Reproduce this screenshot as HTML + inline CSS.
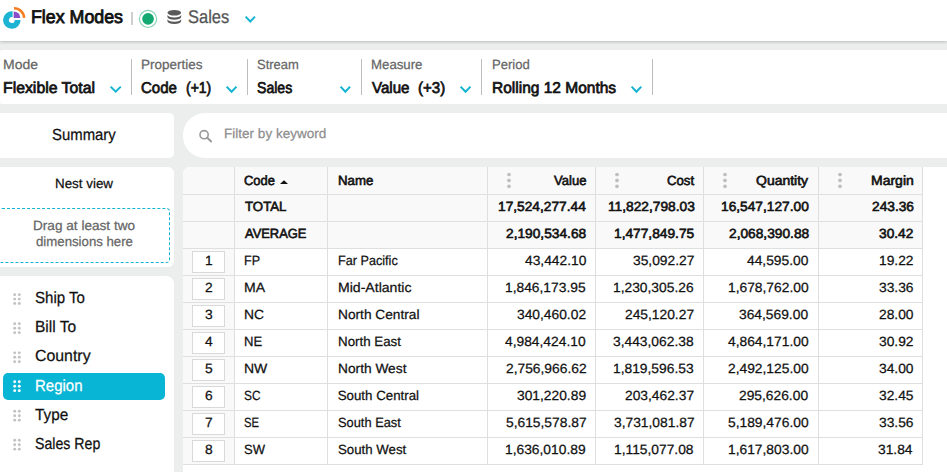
<!DOCTYPE html>
<html>
<head>
<meta charset="utf-8">
<title>Flex Modes</title>
<style>
*{box-sizing:border-box;margin:0;padding:0}
html,body{width:947px;height:472px;overflow:hidden}
body{background:#eceeee;font-family:"Liberation Sans",sans-serif;color:#111;position:relative}
.abs{position:absolute}
.t{position:absolute;white-space:nowrap;line-height:1;transform-origin:0 0;text-rendering:geometricPrecision}
#hdr{left:0;top:0;width:947px;height:41px;background:#fff;box-shadow:0 1px 3px rgba(0,0,0,.22)}
#fbar{left:0;top:50px;width:947px;height:54px;background:#fff;border-radius:2px 0 0 2px}
.sep{position:absolute;top:59px;width:1px;height:36px;background:#bdbdbd}
#sum{left:0;top:113px;width:174px;height:45px;background:#fff;border-radius:0 5px 5px 0}
#nest{left:0;top:167px;width:174px;height:100px;background:#fff;border-radius:0 6px 6px 0}
#drop{left:-2px;top:208px;width:172px;height:55px;border:1px dashed #12b3d3;border-radius:4px}
#dims{left:0;top:276px;width:174px;height:210px;background:#fff;border-radius:0 8px 0 0}
#sel{left:3px;top:373px;width:162px;height:27px;background:#09b5d5;border-radius:5px}
#search{left:183px;top:113px;width:780px;height:45px;background:#fff;border-radius:22px 0 0 22px}
#tbl{left:183px;top:167px;width:780px;height:320px;background:#fff;border-radius:7px 0 0 0;overflow:hidden}
.vl{top:167px;width:1px;height:298px;background:#dee0e0}
.hl{left:183px;width:740px;height:1px;background:#dee0e0}
.nb{left:192px;width:33px;height:22px;background:#fff;border:1px solid #d9d9d9}
</style>
</head>
<body>
<div id="hdr" class="abs"></div>
<svg class="abs" style="left:0;top:0" width="30" height="41" viewBox="0 0 30 41">
<path d="M12.6 11.3 A8.8 8.8 0 1 0 20.6 19.9 L14.7 19.9 A2.9 2.9 0 1 1 12.6 17.3 Z" fill="#1db4d3"/>
<path d="M13.7 17.9 L13.7 11.4 A6.5 6.5 0 0 1 20.3 17.9 Z" fill="#8a4fc8"/>
<path d="M14.0 8.2 A10.1 10.1 0 0 1 24.1 17.9" fill="none" stroke="#f57c1f" stroke-width="2.5"/>
</svg>
<div class="abs" style="left:131px;top:12px;width:2px;height:13px;background:#cfcfcf"></div>
<svg class="abs" style="left:136px;top:6px" width="52" height="26" viewBox="136 6 52 26">
<circle cx="148" cy="18.9" r="8.55" fill="#fff" stroke="#7ccfae" stroke-width="1.1"/>
<circle cx="148.05" cy="18.85" r="5.85" fill="#14a873"/>
<ellipse cx="174.3" cy="12.75" rx="6.85" ry="2.85" fill="#595959"/>
<path d="M167.45 14.75 A6.85 2.85 0 0 0 181.15 14.75 L181.15 17.0 A6.85 2.75 0 0 1 167.45 17.0 Z" fill="#595959"/>
<path d="M167.45 18.95 A6.85 2.85 0 0 0 181.15 18.95 L181.15 21.2 A6.85 2.75 0 0 1 167.45 21.2 Z" fill="#595959"/>
</svg>
<svg class="abs" style="left:243.3px;top:13.6px" width="14.6" height="10.4" viewBox="-2 -2 14.6 10.4"><path d="M0.60 0.60 L5.30 5.50 L10.00 0.60" fill="none" stroke="#16b4d3" stroke-width="2.0"/></svg>
<div id="fbar" class="abs"></div>
<div class="sep" style="left:131px"></div><div class="sep" style="left:247px"></div><div class="sep" style="left:361px"></div><div class="sep" style="left:481px"></div><div class="sep" style="left:652px"></div>
<svg class="abs" style="left:107.8px;top:83.9px" width="15.4" height="10.6" viewBox="-2 -2 15.4 10.6"><path d="M0.60 0.60 L5.70 5.70 L10.80 0.60" fill="none" stroke="#16b4d3" stroke-width="2.0"/></svg><svg class="abs" style="left:223.8px;top:83.9px" width="15.1" height="10.6" viewBox="-2 -2 15.1 10.6"><path d="M0.60 0.60 L5.55 5.70 L10.50 0.60" fill="none" stroke="#16b4d3" stroke-width="2.0"/></svg><svg class="abs" style="left:337.8px;top:83.9px" width="14.7" height="10.6" viewBox="-2 -2 14.7 10.6"><path d="M0.60 0.60 L5.35 5.70 L10.10 0.60" fill="none" stroke="#16b4d3" stroke-width="2.0"/></svg><svg class="abs" style="left:457.8px;top:83.9px" width="15.1" height="10.6" viewBox="-2 -2 15.1 10.6"><path d="M0.60 0.60 L5.55 5.70 L10.50 0.60" fill="none" stroke="#16b4d3" stroke-width="2.0"/></svg><svg class="abs" style="left:629.1px;top:83.9px" width="14.9" height="10.6" viewBox="-2 -2 14.9 10.6"><path d="M0.60 0.60 L5.45 5.70 L10.30 0.60" fill="none" stroke="#16b4d3" stroke-width="2.0"/></svg>
<div id="sum" class="abs"></div>
<div id="nest" class="abs"></div>
<div id="drop" class="abs"></div>
<div id="dims" class="abs"></div>
<div id="sel" class="abs"></div>
<svg class="abs" style="left:0;top:0" width="30" height="472" fill="#c2c2c2"><circle cx="14.7" cy="294.65" r="1.45"/><circle cx="14.7" cy="299.10" r="1.45"/><circle cx="14.7" cy="303.55" r="1.45"/><circle cx="19.3" cy="294.65" r="1.45"/><circle cx="19.3" cy="299.10" r="1.45"/><circle cx="19.3" cy="303.55" r="1.45"/></svg><svg class="abs" style="left:0;top:0" width="30" height="472" fill="#c2c2c2"><circle cx="14.7" cy="323.75" r="1.45"/><circle cx="14.7" cy="328.20" r="1.45"/><circle cx="14.7" cy="332.65" r="1.45"/><circle cx="19.3" cy="323.75" r="1.45"/><circle cx="19.3" cy="328.20" r="1.45"/><circle cx="19.3" cy="332.65" r="1.45"/></svg><svg class="abs" style="left:0;top:0" width="30" height="472" fill="#c2c2c2"><circle cx="14.7" cy="352.85" r="1.45"/><circle cx="14.7" cy="357.30" r="1.45"/><circle cx="14.7" cy="361.75" r="1.45"/><circle cx="19.3" cy="352.85" r="1.45"/><circle cx="19.3" cy="357.30" r="1.45"/><circle cx="19.3" cy="361.75" r="1.45"/></svg><svg class="abs" style="left:0;top:0" width="30" height="472" fill="#fff"><circle cx="14.7" cy="381.75" r="1.45"/><circle cx="14.7" cy="386.20" r="1.45"/><circle cx="14.7" cy="390.65" r="1.45"/><circle cx="19.3" cy="381.75" r="1.45"/><circle cx="19.3" cy="386.20" r="1.45"/><circle cx="19.3" cy="390.65" r="1.45"/></svg><svg class="abs" style="left:0;top:0" width="30" height="472" fill="#c2c2c2"><circle cx="14.7" cy="411.25" r="1.45"/><circle cx="14.7" cy="415.70" r="1.45"/><circle cx="14.7" cy="420.15" r="1.45"/><circle cx="19.3" cy="411.25" r="1.45"/><circle cx="19.3" cy="415.70" r="1.45"/><circle cx="19.3" cy="420.15" r="1.45"/></svg><svg class="abs" style="left:0;top:0" width="30" height="472" fill="#c2c2c2"><circle cx="14.7" cy="440.25" r="1.45"/><circle cx="14.7" cy="444.70" r="1.45"/><circle cx="14.7" cy="449.15" r="1.45"/><circle cx="19.3" cy="440.25" r="1.45"/><circle cx="19.3" cy="444.70" r="1.45"/><circle cx="19.3" cy="449.15" r="1.45"/></svg>
<div id="search" class="abs"></div>
<svg class="abs" style="left:196px;top:126px" width="20" height="20" viewBox="196 126 20 20"><circle cx="204.1" cy="134.7" r="4.1" fill="none" stroke="#9a9a9a" stroke-width="1.6"/><path d="M207.2 137.8 L211.2 141.4" stroke="#9a9a9a" stroke-width="2" stroke-linecap="round"/></svg>
<div id="tbl" class="abs"><div class="abs" style="left:0;top:0;width:739px;height:81px;background:#f9f9f9"></div><div class="abs" style="left:0;top:0;width:51px;height:297px;background:#f9f9f9"></div></div>
<div class="abs vl" style="left:234px"></div><div class="abs vl" style="left:327px"></div><div class="abs vl" style="left:487px"></div><div class="abs vl" style="left:595px"></div><div class="abs vl" style="left:703px"></div><div class="abs vl" style="left:818px"></div><div class="abs vl" style="left:922px"></div>
<div class="abs hl" style="top:194px"></div><div class="abs hl" style="top:221px"></div><div class="abs hl" style="top:248px"></div><div class="abs hl" style="top:275px"></div><div class="abs hl" style="top:302px"></div><div class="abs hl" style="top:329px"></div><div class="abs hl" style="top:356px"></div><div class="abs hl" style="top:383px"></div><div class="abs hl" style="top:410px"></div><div class="abs hl" style="top:437px"></div><div class="abs hl" style="top:464px"></div>
<div class="abs nb" style="top:251px"></div><div class="abs nb" style="top:278px"></div><div class="abs nb" style="top:305px"></div><div class="abs nb" style="top:332px"></div><div class="abs nb" style="top:359px"></div><div class="abs nb" style="top:386px"></div><div class="abs nb" style="top:413px"></div><div class="abs nb" style="top:440px"></div>
<svg class="abs" style="left:505.6px;top:170px" width="6" height="20" viewBox="0 0 6 20" fill="#bfbfbf"><circle cx="3" cy="4.5" r="1.85"/><circle cx="3" cy="10.4" r="1.85"/><circle cx="3" cy="16.3" r="1.85"/></svg><svg class="abs" style="left:613.6px;top:170px" width="6" height="20" viewBox="0 0 6 20" fill="#bfbfbf"><circle cx="3" cy="4.5" r="1.85"/><circle cx="3" cy="10.4" r="1.85"/><circle cx="3" cy="16.3" r="1.85"/></svg><svg class="abs" style="left:721.6px;top:170px" width="6" height="20" viewBox="0 0 6 20" fill="#bfbfbf"><circle cx="3" cy="4.5" r="1.85"/><circle cx="3" cy="10.4" r="1.85"/><circle cx="3" cy="16.3" r="1.85"/></svg><svg class="abs" style="left:836.8px;top:170px" width="6" height="20" viewBox="0 0 6 20" fill="#bfbfbf"><circle cx="3" cy="4.5" r="1.85"/><circle cx="3" cy="10.4" r="1.85"/><circle cx="3" cy="16.3" r="1.85"/></svg>
<svg class="abs" style="left:280px;top:180px" width="8" height="4" viewBox="0 0 8 4"><path d="M0 4 L4 0.2 L8 4 Z" fill="#111"/></svg>
<span id="t_title" class="t" style="left:31.03px;top:8.00px;font-size:18.4px;font-weight:400;color:#111;-webkit-text-stroke:0.85px;transform:scaleX(0.9675)">Flex Modes</span>
<span id="t_sales" class="t" style="left:188.03px;top:8.00px;font-size:18.4px;font-weight:400;color:#555;-webkit-text-stroke:0.25px;transform:scaleX(0.8961)">Sales</span>
<span id="t_l_mode" class="t" style="left:2.85px;top:58.00px;font-size:13.3px;font-weight:400;color:#666;-webkit-text-stroke:0.25px;transform:scaleX(1.0520)">Mode</span>
<span id="t_v_mode" class="t" style="left:2.89px;top:81.00px;font-size:15.7px;font-weight:400;color:#111;-webkit-text-stroke:0.72px;transform:scaleX(1.0078)">Flexible Total</span>
<span id="t_l_prop" class="t" style="left:140.78px;top:58.00px;font-size:13.3px;font-weight:400;color:#666;-webkit-text-stroke:0.25px;transform:scaleX(1.0160)">Properties</span>
<span id="t_v_prop1" class="t" style="left:141.32px;top:81.00px;font-size:15.7px;font-weight:400;color:#111;-webkit-text-stroke:0.72px;transform:scaleX(0.9578)">Code</span>
<span id="t_v_prop2" class="t" style="left:186.25px;top:81.00px;font-size:15.7px;font-weight:400;color:#111;-webkit-text-stroke:0.72px;transform:scaleX(0.8917)">(+1)</span>
<span id="t_l_stream" class="t" style="left:257.01px;top:58.00px;font-size:13.3px;font-weight:400;color:#666;-webkit-text-stroke:0.25px;transform:scaleX(0.9749)">Stream</span>
<span id="t_v_stream" class="t" style="left:257.28px;top:81.00px;font-size:15.7px;font-weight:400;color:#111;-webkit-text-stroke:0.72px;transform:scaleX(0.8981)">Sales</span>
<span id="t_l_meas" class="t" style="left:370.70px;top:58.00px;font-size:13.3px;font-weight:400;color:#666;-webkit-text-stroke:0.25px;transform:scaleX(0.9950)">Measure</span>
<span id="t_v_meas1" class="t" style="left:371.88px;top:81.00px;font-size:15.7px;font-weight:400;color:#111;-webkit-text-stroke:0.72px;transform:scaleX(0.9631)">Value</span>
<span id="t_v_meas2" class="t" style="left:418.42px;top:81.00px;font-size:15.7px;font-weight:400;color:#111;-webkit-text-stroke:0.72px;transform:scaleX(0.9615)">(+3)</span>
<span id="t_l_per" class="t" style="left:491.92px;top:58.00px;font-size:13.3px;font-weight:400;color:#666;-webkit-text-stroke:0.25px;transform:scaleX(0.9823)">Period</span>
<span id="t_v_per" class="t" style="left:491.91px;top:81.00px;font-size:15.7px;font-weight:400;color:#111;-webkit-text-stroke:0.72px;transform:scaleX(0.9880)">Rolling 12 Months</span>
<span id="t_sum" class="t" style="left:52.04px;top:127.00px;font-size:16.1px;font-weight:400;color:#111;-webkit-text-stroke:0.25px;transform:scaleX(0.9255)">Summary</span>
<span id="t_nest" class="t" style="left:55.19px;top:177.00px;font-size:13.3px;font-weight:400;color:#111;-webkit-text-stroke:0.25px;transform:scaleX(1.0062)">Nest view</span>
<span id="t_drag1" class="t" style="left:33.38px;top:219.00px;font-size:13.3px;font-weight:400;color:#666;-webkit-text-stroke:0.25px;transform:scaleX(1.0229)">Drag at least two</span>
<span id="t_drag2" class="t" style="left:35.90px;top:235.00px;font-size:13.3px;font-weight:400;color:#666;-webkit-text-stroke:0.25px;transform:scaleX(0.9938)">dimensions here</span>
<span id="t_dim0" class="t" style="left:34.53px;top:290.00px;font-size:16.1px;font-weight:400;color:#111;-webkit-text-stroke:0.25px;transform:scaleX(0.9359)">Ship To</span>
<span id="t_dim1" class="t" style="left:34.79px;top:319.00px;font-size:16.1px;font-weight:400;color:#111;-webkit-text-stroke:0.25px;transform:scaleX(0.9644)">Bill To</span>
<span id="t_dim2" class="t" style="left:34.76px;top:348.00px;font-size:16.1px;font-weight:400;color:#111;-webkit-text-stroke:0.25px;transform:scaleX(0.9865)">Country</span>
<span id="t_dim3" class="t" style="left:34.84px;top:378.00px;font-size:16.1px;font-weight:400;color:#fff;-webkit-text-stroke:0.25px;transform:scaleX(0.9313)">Region</span>
<span id="t_dim4" class="t" style="left:34.76px;top:407.00px;font-size:16.1px;font-weight:400;color:#111;-webkit-text-stroke:0.25px;transform:scaleX(0.9529)">Type</span>
<span id="t_dim5" class="t" style="left:34.56px;top:436.00px;font-size:16.1px;font-weight:400;color:#111;-webkit-text-stroke:0.25px;transform:scaleX(0.8792)">Sales Rep</span>
<span id="t_filter" class="t" style="left:223.69px;top:127.00px;font-size:13.4px;font-weight:400;color:#8e8e8e;-webkit-text-stroke:0.25px;transform:scaleX(1.0111)">Filter by keyword</span>
<span id="t_hcode" class="t" style="left:244.21px;top:174.00px;font-size:13.3px;font-weight:400;color:#111;-webkit-text-stroke:0.61px;transform:scaleX(0.9710)">Code</span>
<span id="t_hname" class="t" style="left:337.65px;top:174.00px;font-size:13.3px;font-weight:400;color:#111;-webkit-text-stroke:0.61px;transform:scaleX(0.9971)">Name</span>
<span id="t_h0" class="t" style="left:553.75px;top:174.00px;font-size:13.3px;font-weight:400;color:#111;-webkit-text-stroke:0.61px;transform:scaleX(0.9818)">Value</span>
<span id="t_h1" class="t" style="left:666.71px;top:174.00px;font-size:13.3px;font-weight:400;color:#111;-webkit-text-stroke:0.61px;transform:scaleX(0.9889)">Cost</span>
<span id="t_h2" class="t" style="left:755.94px;top:174.00px;font-size:13.3px;font-weight:400;color:#111;-webkit-text-stroke:0.61px;transform:scaleX(1.0525)">Quantity</span>
<span id="t_h3" class="t" style="left:870.91px;top:174.00px;font-size:13.3px;font-weight:400;color:#111;-webkit-text-stroke:0.61px;transform:scaleX(1.0522)">Margin</span>
<span id="t_c0" class="t" style="left:244.50px;top:200.00px;font-size:13.3px;font-weight:400;color:#111;-webkit-text-stroke:0.61px;transform:scaleX(0.9952)">TOTAL</span>
<span id="t_c1" class="t" style="left:244.54px;top:227.00px;font-size:13.3px;font-weight:400;color:#111;-webkit-text-stroke:0.61px;transform:scaleX(0.9708)">AVERAGE</span>
<span id="t_c2" class="t" style="left:243.96px;top:254.00px;font-size:13.3px;font-weight:400;color:#111;-webkit-text-stroke:0.25px;transform:scaleX(0.9419)">FP</span>
<span id="t_c3" class="t" style="left:243.94px;top:281.00px;font-size:13.3px;font-weight:400;color:#111;-webkit-text-stroke:0.25px;transform:scaleX(1.0579)">MA</span>
<span id="t_c4" class="t" style="left:243.96px;top:308.00px;font-size:13.3px;font-weight:400;color:#111;-webkit-text-stroke:0.25px;transform:scaleX(1.0423)">NC</span>
<span id="t_c5" class="t" style="left:244.02px;top:335.00px;font-size:13.3px;font-weight:400;color:#111;-webkit-text-stroke:0.25px;transform:scaleX(0.9824)">NE</span>
<span id="t_c6" class="t" style="left:243.95px;top:362.00px;font-size:13.3px;font-weight:400;color:#111;-webkit-text-stroke:0.25px;transform:scaleX(1.0541)">NW</span>
<span id="t_c7" class="t" style="left:244.05px;top:389.00px;font-size:13.3px;font-weight:400;color:#111;-webkit-text-stroke:0.25px;transform:scaleX(0.8914)">SC</span>
<span id="t_c8" class="t" style="left:244.08px;top:416.00px;font-size:13.3px;font-weight:400;color:#111;-webkit-text-stroke:0.25px;transform:scaleX(0.8478)">SE</span>
<span id="t_c9" class="t" style="left:244.01px;top:443.00px;font-size:13.3px;font-weight:400;color:#111;-webkit-text-stroke:0.25px;transform:scaleX(0.9810)">SW</span>
<span id="t_m2" class="t" style="left:337.65px;top:254.00px;font-size:13.3px;font-weight:400;color:#111;-webkit-text-stroke:0.25px;transform:scaleX(0.9512)">Far Pacific</span>
<span id="t_m3" class="t" style="left:337.54px;top:281.00px;font-size:13.3px;font-weight:400;color:#111;-webkit-text-stroke:0.25px;transform:scaleX(1.0579)">Mid-Atlantic</span>
<span id="t_m4" class="t" style="left:337.57px;top:308.00px;font-size:13.3px;font-weight:400;color:#111;-webkit-text-stroke:0.25px;transform:scaleX(1.0304)">North Central</span>
<span id="t_m5" class="t" style="left:337.60px;top:335.00px;font-size:13.3px;font-weight:400;color:#111;-webkit-text-stroke:0.25px;transform:scaleX(1.0024)">North East</span>
<span id="t_m6" class="t" style="left:337.57px;top:362.00px;font-size:13.3px;font-weight:400;color:#111;-webkit-text-stroke:0.25px;transform:scaleX(1.0330)">North West</span>
<span id="t_m7" class="t" style="left:337.70px;top:389.00px;font-size:13.3px;font-weight:400;color:#111;-webkit-text-stroke:0.25px;transform:scaleX(1.0000)">South Central</span>
<span id="t_m8" class="t" style="left:337.72px;top:416.00px;font-size:13.3px;font-weight:400;color:#111;-webkit-text-stroke:0.25px;transform:scaleX(0.9659)">South East</span>
<span id="t_m9" class="t" style="left:337.70px;top:443.00px;font-size:13.3px;font-weight:400;color:#111;-webkit-text-stroke:0.25px;transform:scaleX(0.9971)">South West</span>
<span id="t_d0_0" class="t" style="left:498.23px;top:200.00px;font-size:13.3px;font-weight:400;color:#111;-webkit-text-stroke:0.61px;transform:scaleX(1.0326)">17,524,277.44</span>
<span id="t_d0_1" class="t" style="left:607.52px;top:200.00px;font-size:13.3px;font-weight:400;color:#111;-webkit-text-stroke:0.61px;transform:scaleX(1.0326)">11,822,798.03</span>
<span id="t_d0_2" class="t" style="left:720.88px;top:200.00px;font-size:13.3px;font-weight:400;color:#111;-webkit-text-stroke:0.61px;transform:scaleX(1.0326)">16,547,127.00</span>
<span id="t_d0_3" class="t" style="left:871.64px;top:200.00px;font-size:13.3px;font-weight:400;color:#111;-webkit-text-stroke:0.61px;transform:scaleX(1.0326)">243.36</span>
<span id="t_d1_0" class="t" style="left:506.23px;top:227.00px;font-size:13.3px;font-weight:400;color:#111;-webkit-text-stroke:0.61px;transform:scaleX(1.0326)">2,190,534.68</span>
<span id="t_d1_1" class="t" style="left:613.97px;top:227.00px;font-size:13.3px;font-weight:400;color:#111;-webkit-text-stroke:0.61px;transform:scaleX(1.0326)">1,477,849.75</span>
<span id="t_d1_2" class="t" style="left:728.63px;top:227.00px;font-size:13.3px;font-weight:400;color:#111;-webkit-text-stroke:0.61px;transform:scaleX(1.0326)">2,068,390.88</span>
<span id="t_d1_3" class="t" style="left:879.12px;top:227.00px;font-size:13.3px;font-weight:400;color:#111;-webkit-text-stroke:0.61px;transform:scaleX(1.0326)">30.42</span>
<span id="t_d2_0" class="t" style="left:524.54px;top:254.00px;font-size:13.3px;font-weight:400;color:#111;-webkit-text-stroke:0.25px;transform:scaleX(1.0376)">43,442.10</span>
<span id="t_d2_1" class="t" style="left:632.80px;top:254.00px;font-size:13.3px;font-weight:400;color:#111;-webkit-text-stroke:0.25px;transform:scaleX(1.0376)">35,092.27</span>
<span id="t_d2_2" class="t" style="left:746.94px;top:254.00px;font-size:13.3px;font-weight:400;color:#111;-webkit-text-stroke:0.25px;transform:scaleX(1.0376)">44,595.00</span>
<span id="t_d2_3" class="t" style="left:878.72px;top:254.00px;font-size:13.3px;font-weight:400;color:#111;-webkit-text-stroke:0.25px;transform:scaleX(1.0376)">19.22</span>
<span id="t_d3_0" class="t" style="left:505.34px;top:281.00px;font-size:13.3px;font-weight:400;color:#111;-webkit-text-stroke:0.25px;transform:scaleX(1.0376)">1,846,173.95</span>
<span id="t_d3_1" class="t" style="left:613.34px;top:281.00px;font-size:13.3px;font-weight:400;color:#111;-webkit-text-stroke:0.25px;transform:scaleX(1.0376)">1,230,305.26</span>
<span id="t_d3_2" class="t" style="left:727.74px;top:281.00px;font-size:13.3px;font-weight:400;color:#111;-webkit-text-stroke:0.25px;transform:scaleX(1.0376)">1,678,762.00</span>
<span id="t_d3_3" class="t" style="left:878.72px;top:281.00px;font-size:13.3px;font-weight:400;color:#111;-webkit-text-stroke:0.25px;transform:scaleX(1.0376)">33.36</span>
<span id="t_d4_0" class="t" style="left:517.02px;top:308.00px;font-size:13.3px;font-weight:400;color:#111;-webkit-text-stroke:0.25px;transform:scaleX(1.0376)">340,460.02</span>
<span id="t_d4_1" class="t" style="left:625.02px;top:308.00px;font-size:13.3px;font-weight:400;color:#111;-webkit-text-stroke:0.25px;transform:scaleX(1.0376)">245,120.27</span>
<span id="t_d4_2" class="t" style="left:739.42px;top:308.00px;font-size:13.3px;font-weight:400;color:#111;-webkit-text-stroke:0.25px;transform:scaleX(1.0376)">364,569.00</span>
<span id="t_d4_3" class="t" style="left:878.72px;top:308.00px;font-size:13.3px;font-weight:400;color:#111;-webkit-text-stroke:0.25px;transform:scaleX(1.0376)">28.00</span>
<span id="t_d5_0" class="t" style="left:505.34px;top:335.00px;font-size:13.3px;font-weight:400;color:#111;-webkit-text-stroke:0.25px;transform:scaleX(1.0376)">4,984,424.10</span>
<span id="t_d5_1" class="t" style="left:613.34px;top:335.00px;font-size:13.3px;font-weight:400;color:#111;-webkit-text-stroke:0.25px;transform:scaleX(1.0376)">3,443,062.38</span>
<span id="t_d5_2" class="t" style="left:727.74px;top:335.00px;font-size:13.3px;font-weight:400;color:#111;-webkit-text-stroke:0.25px;transform:scaleX(1.0376)">4,864,171.00</span>
<span id="t_d5_3" class="t" style="left:878.72px;top:335.00px;font-size:13.3px;font-weight:400;color:#111;-webkit-text-stroke:0.25px;transform:scaleX(1.0376)">30.92</span>
<span id="t_d6_0" class="t" style="left:505.60px;top:362.00px;font-size:13.3px;font-weight:400;color:#111;-webkit-text-stroke:0.25px;transform:scaleX(1.0376)">2,756,966.62</span>
<span id="t_d6_1" class="t" style="left:613.34px;top:362.00px;font-size:13.3px;font-weight:400;color:#111;-webkit-text-stroke:0.25px;transform:scaleX(1.0376)">1,819,596.53</span>
<span id="t_d6_2" class="t" style="left:727.74px;top:362.00px;font-size:13.3px;font-weight:400;color:#111;-webkit-text-stroke:0.25px;transform:scaleX(1.0376)">2,492,125.00</span>
<span id="t_d6_3" class="t" style="left:878.72px;top:362.00px;font-size:13.3px;font-weight:400;color:#111;-webkit-text-stroke:0.25px;transform:scaleX(1.0376)">34.00</span>
<span id="t_d7_0" class="t" style="left:517.02px;top:389.00px;font-size:13.3px;font-weight:400;color:#111;-webkit-text-stroke:0.25px;transform:scaleX(1.0376)">301,220.89</span>
<span id="t_d7_1" class="t" style="left:625.02px;top:389.00px;font-size:13.3px;font-weight:400;color:#111;-webkit-text-stroke:0.25px;transform:scaleX(1.0376)">203,462.37</span>
<span id="t_d7_2" class="t" style="left:739.42px;top:389.00px;font-size:13.3px;font-weight:400;color:#111;-webkit-text-stroke:0.25px;transform:scaleX(1.0376)">295,626.00</span>
<span id="t_d7_3" class="t" style="left:878.72px;top:389.00px;font-size:13.3px;font-weight:400;color:#111;-webkit-text-stroke:0.25px;transform:scaleX(1.0376)">32.45</span>
<span id="t_d8_0" class="t" style="left:505.60px;top:416.00px;font-size:13.3px;font-weight:400;color:#111;-webkit-text-stroke:0.25px;transform:scaleX(1.0376)">5,615,578.87</span>
<span id="t_d8_1" class="t" style="left:613.60px;top:416.00px;font-size:13.3px;font-weight:400;color:#111;-webkit-text-stroke:0.25px;transform:scaleX(1.0376)">3,731,081.87</span>
<span id="t_d8_2" class="t" style="left:727.74px;top:416.00px;font-size:13.3px;font-weight:400;color:#111;-webkit-text-stroke:0.25px;transform:scaleX(1.0376)">5,189,476.00</span>
<span id="t_d8_3" class="t" style="left:878.72px;top:416.00px;font-size:13.3px;font-weight:400;color:#111;-webkit-text-stroke:0.25px;transform:scaleX(1.0376)">33.56</span>
<span id="t_d9_0" class="t" style="left:505.34px;top:443.00px;font-size:13.3px;font-weight:400;color:#111;-webkit-text-stroke:0.25px;transform:scaleX(1.0376)">1,636,010.89</span>
<span id="t_d9_1" class="t" style="left:614.38px;top:443.00px;font-size:13.3px;font-weight:400;color:#111;-webkit-text-stroke:0.25px;transform:scaleX(1.0376)">1,115,077.08</span>
<span id="t_d9_2" class="t" style="left:727.74px;top:443.00px;font-size:13.3px;font-weight:400;color:#111;-webkit-text-stroke:0.25px;transform:scaleX(1.0376)">1,617,803.00</span>
<span id="t_d9_3" class="t" style="left:878.46px;top:443.00px;font-size:13.3px;font-weight:400;color:#111;-webkit-text-stroke:0.25px;transform:scaleX(1.0376)">31.84</span>
<span id="t_n2" class="t" style="left:204.68px;top:254.00px;font-size:13.3px;font-weight:400;color:#111;-webkit-text-stroke:0.25px;transform:scaleX(1.0376)">1</span>
<span id="t_n3" class="t" style="left:204.94px;top:281.00px;font-size:13.3px;font-weight:400;color:#111;-webkit-text-stroke:0.25px;transform:scaleX(1.0376)">2</span>
<span id="t_n4" class="t" style="left:204.81px;top:308.00px;font-size:13.3px;font-weight:400;color:#111;-webkit-text-stroke:0.25px;transform:scaleX(1.0376)">3</span>
<span id="t_n5" class="t" style="left:204.81px;top:335.00px;font-size:13.3px;font-weight:400;color:#111;-webkit-text-stroke:0.25px;transform:scaleX(1.0376)">4</span>
<span id="t_n6" class="t" style="left:204.81px;top:362.00px;font-size:13.3px;font-weight:400;color:#111;-webkit-text-stroke:0.25px;transform:scaleX(1.0376)">5</span>
<span id="t_n7" class="t" style="left:204.81px;top:389.00px;font-size:13.3px;font-weight:400;color:#111;-webkit-text-stroke:0.25px;transform:scaleX(1.0376)">6</span>
<span id="t_n8" class="t" style="left:204.94px;top:416.00px;font-size:13.3px;font-weight:400;color:#111;-webkit-text-stroke:0.25px;transform:scaleX(1.0376)">7</span>
<span id="t_n9" class="t" style="left:204.81px;top:443.00px;font-size:13.3px;font-weight:400;color:#111;-webkit-text-stroke:0.25px;transform:scaleX(1.0376)">8</span>
</body>
</html>
